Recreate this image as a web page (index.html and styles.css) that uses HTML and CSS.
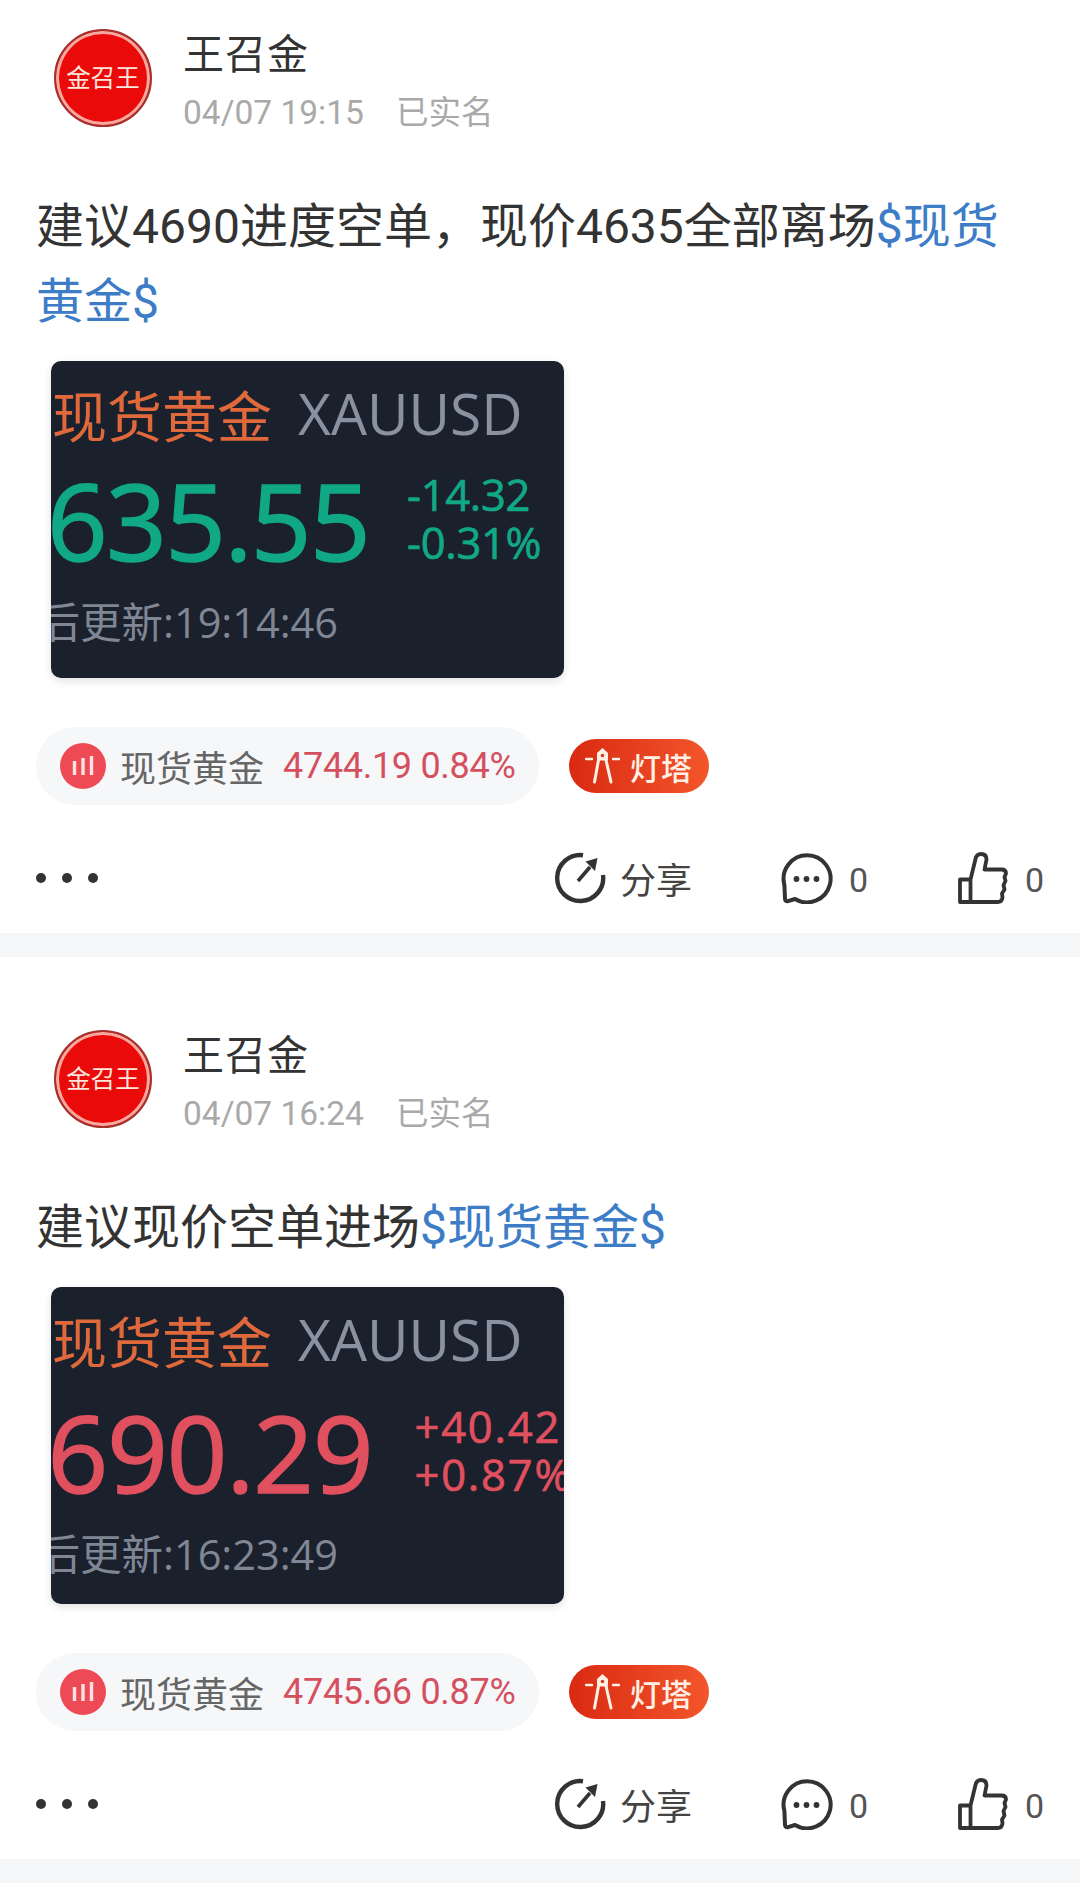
FILE: index.html
```html
<!DOCTYPE html>
<html lang="zh-CN">
<head>
<meta charset="utf-8">
<title>王召金</title>
<link rel="stylesheet" href="styles.css">
</head>
<body>
<svg class="defs" width="0" height="0" aria-hidden="true">
  <symbol id="i-bars" viewBox="0 0 46 46">
    <circle cx="23" cy="23" r="23" fill="#ee4a55"/>
    <path d="M14.5 18v14M23 15v17M31.5 13v19" stroke="#fbe3e3" stroke-width="3.4" fill="none"/>
  </symbol>
  <symbol id="i-tower" viewBox="0 0 36 36">
    <path d="M17.5 0L23 5V12.500H12V5z" fill="#fff0e6"/>
    <circle cx="17.500" cy="7.500" r="1.800" fill="#e03a1c"/>
    <g fill="none" stroke="#fff0e6" stroke-linecap="round" stroke-linejoin="round">
      <path d="M13.500 12L9.500 34M21 12L26 34" stroke-width="3"/>
      <path d="M1 11h6M28 11h6" stroke-width="2.400"/>
    </g>
  </symbol>
  <symbol id="i-share" viewBox="0 0 52 52">
    <path d="M29 3.2A23 23 0 1 0 49 23" fill="none" stroke="#333" stroke-width="4.4"/>
    <path d="M24 29L36 15" fill="none" stroke="#333" stroke-width="3.6"/>
    <path d="M43.5 6L31.5 9.5 41 19z" fill="#333"/>
  </symbol>
  <symbol id="i-comment" viewBox="0 0 52 52">
    <path d="M14 47A23.5 23.5 0 1 0 3.4 33L4 46.5Q4 49.5 7 49.2z" fill="none" stroke="#333" stroke-width="4" stroke-linejoin="round"/>
    <circle cx="15.5" cy="27" r="2.9" fill="#333"/>
    <circle cx="25.5" cy="27" r="2.9" fill="#333"/>
    <circle cx="35.5" cy="27" r="2.9" fill="#333"/>
  </symbol>
  <symbol id="i-like" viewBox="0 0 50 52">
    <path d="M2 27.5h10.5V50H2zM12.5 27.5L17.5 7Q18.5 2 23 2 28.5 2 28.5 7.5L26.5 17.5H43.5Q48 17.5 48 21.5L46.5 25 47.5 29 45.5 33 46.5 37.5 44 41.5 44.5 45.5Q44 50 39.5 50H12.5" fill="none" stroke="#333" stroke-width="3.8" stroke-linejoin="round"/>
  </symbol>
</svg>

<main class="feed">
  <article class="post">
    <header class="head">
      <div class="avatar"><span class="avatar-text">金召王</span></div>
      <div class="meta">
        <div class="name">王召金</div>
        <div class="sub"><span>04/07 19:15</span><span class="real">已实名</span></div>
      </div>
    </header>
    <p class="body">建议4690进度空单，现价4635全部离场<span class="link">$现货黄金$</span></p>
    <div class="card">
      <div class="card-title"><span class="cn">现货黄金</span><span class="code">XAUUSD</span></div>
      <div class="card-quote down">
        <span class="price">4635.55</span>
        <span class="change"><span>-14.32</span><span>-0.31%</span></span>
      </div>
      <div class="card-time">最后更新:19:14:46</div>
    </div>
    <div class="tags">
      <div class="stock">
        <svg class="bars"><use href="#i-bars"/></svg>
        <span class="stock-name">现货黄金</span>
        <span class="stock-val">4744.19 0.84%</span>
      </div>
      <div class="beacon"><svg class="tower"><use href="#i-tower"/></svg><span>灯塔</span></div>
    </div>
    <footer class="actions">
      <div class="dots"><i></i><i></i><i></i></div>
      <div class="action act-share"><svg class="ico"><use href="#i-share"/></svg><span>分享</span></div>
      <div class="action act-comment"><svg class="ico"><use href="#i-comment"/></svg><span>0</span></div>
      <div class="action act-like"><svg class="ico-like"><use href="#i-like"/></svg><span>0</span></div>
    </footer>
  </article>
  <div class="divider"></div>
  <article class="post">
    <header class="head">
      <div class="avatar"><span class="avatar-text">金召王</span></div>
      <div class="meta">
        <div class="name">王召金</div>
        <div class="sub"><span>04/07 16:24</span><span class="real">已实名</span></div>
      </div>
    </header>
    <p class="body">建议现价空单进场<span class="link">$现货黄金$</span></p>
    <div class="card">
      <div class="card-title"><span class="cn">现货黄金</span><span class="code">XAUUSD</span></div>
      <div class="card-quote up">
        <span class="price">4690.29</span>
        <span class="change"><span>+40.42</span><span>+0.87%</span></span>
      </div>
      <div class="card-time">最后更新:16:23:49</div>
    </div>
    <div class="tags">
      <div class="stock">
        <svg class="bars"><use href="#i-bars"/></svg>
        <span class="stock-name">现货黄金</span>
        <span class="stock-val">4745.66 0.87%</span>
      </div>
      <div class="beacon"><svg class="tower"><use href="#i-tower"/></svg><span>灯塔</span></div>
    </div>
    <footer class="actions">
      <div class="dots"><i></i><i></i><i></i></div>
      <div class="action act-share"><svg class="ico"><use href="#i-share"/></svg><span>分享</span></div>
      <div class="action act-comment"><svg class="ico"><use href="#i-comment"/></svg><span>0</span></div>
      <div class="action act-like"><svg class="ico-like"><use href="#i-like"/></svg><span>0</span></div>
    </footer>
  </article>
  <div class="divider"></div>
</main>
</body>
</html>
```

FILE: styles.css
```css
* { box-sizing: border-box; }
html, body { margin: 0; padding: 0; background: #fff; }
body {
  width: 1080px;
  height: 1898px;
  overflow: hidden;
  font-family: Roboto, "Noto Sans CJK SC", sans-serif;
  color: #333;
}
.defs { position: absolute; }

.post { padding-top: 29px; }
.divider { height: 24px; background: #f5f6f8; margin-top: 29px; margin-bottom: 44px; }

.head { display: flex; padding-left: 54px; height: 98px; }
.avatar {
  width: 98px;
  height: 98px;
  border-radius: 50%;
  background: #ea0a0a;
  border: 2px solid #a5302c;
  box-shadow: inset 0 0 0 3px #f7a9a0;
  display: flex;
  align-items: center;
  justify-content: center;
  flex: none;
}
.avatar-text {
  color: #fbe6dc;
  font-size: 24.5px;
  line-height: 30px;
  margin-top: 2px;
  white-space: nowrap;
}
.meta { margin-left: 31px; }
.name { font-size: 41px; line-height: 50px; margin-top: 1px; letter-spacing: 1px; color: #333; }
.sub {
  display: flex;
  gap: 32px;
  font-size: 33.5px;
  line-height: 44px;
  margin-top: 11px;
  color: #a9a9a9;
}
.real { font-size: 32.5px; }

.body {
  margin: 62px 70px 0 36px;
  font-size: 48px;
  line-height: 75px;
  color: #333;
}
.link { color: #3d7cc6; }

.card {
  width: 513px;
  height: 317px;
  margin: 22px 0 0 51px;
  border-radius: 10px;
  background: #1a202c;
  box-shadow: 0 3px 8px rgba(0, 0, 0, .12);
  overflow: hidden;
  font-family: "Open Sans", "Noto Sans CJK SC", sans-serif;
}
.card-title { display: flex; align-items: center; height: 60px; margin-top: 22px; padding-left: 1px; }
.cn { font-size: 55px; color: #e0693c; font-family: "Noto Sans CJK SC", sans-serif; }
.code { font-size: 57px; color: #8a92a2; margin-left: 26px; }
.card-quote { display: flex; margin-top: 17px; height: 120px; white-space: nowrap; }
.price { font-size: 106px; -webkit-text-stroke: 1.6px currentColor; letter-spacing: -1.5px; line-height: 120px; margin-left: -63px; flex: none; }
.change { display: flex; flex-direction: column; font-size: 43.5px; -webkit-text-stroke: .7px currentColor; letter-spacing: -.3px; line-height: 48px; margin: 11px 0 0 38px; flex: none; }
.down { color: #11a886; }
.up { color: #e0505f; margin-top: 23px; }
.up .price { letter-spacing: -1px; }
.up .change { letter-spacing: 1.8px; margin-left: 42px; }
.card-time {
  margin: 14px 0 0 -54px;
  font-size: 41.5px;
  line-height: 56px;
  white-space: nowrap;
  color: #7f8694;
}

.tags { display: flex; align-items: center; margin: 49px 0 0 36px; }
.stock {
  display: flex;
  align-items: center;
  width: 503px;
  height: 78px;
  border-radius: 39px;
  padding-left: 24px;
  background: #f6f7f9;
}
.bars { width: 46px; height: 46px; flex: none; }
.stock-name { margin-left: 14px; font-size: 36px; color: #666; }
.stock-val { margin-left: 19px; font-size: 36px; color: #d5505f; white-space: nowrap; letter-spacing: -.3px; }
.beacon {
  display: flex;
  align-items: center;
  width: 140px;
  height: 54px;
  margin-left: 30px;
  padding-left: 16px;
  border-radius: 27px;
  background: linear-gradient(90deg, #d92a12, #f3562b);
  color: #fff0e6;
  font-size: 31px;
  font-weight: 500;
}
.tower { width: 36px; height: 36px; flex: none; margin-right: 9px; }

.actions { display: flex; align-items: center; height: 52px; margin-top: 47px; padding-left: 36px; }
.dots { display: flex; gap: 16px; width: 508px; }
.dots i { width: 10px; height: 10px; border-radius: 50%; background: #333; }
.action { display: flex; align-items: center; font-size: 34px; color: #555; }
.act-share { width: 227px; margin-left: 10px; }
.act-share span { font-size: 36px; margin-left: 14px; color: #444; }
.act-comment { width: 177px; }
.act-comment span { margin-left: 16px; margin-top: 3px; }
.act-like span { margin-left: 17px; margin-top: 3px; }
.ico { width: 52px; height: 52px; flex: none; }
.ico-like { width: 50px; height: 52px; flex: none; }
```
